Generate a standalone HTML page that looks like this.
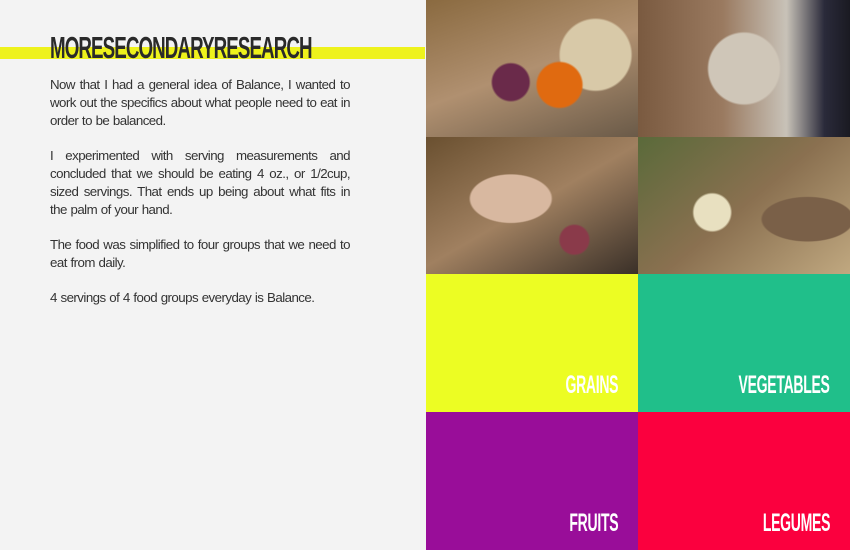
<!DOCTYPE html>
<html><head><style>
body{margin:0;width:850px;height:550px;overflow:hidden;background:#f3f3f3;position:relative;font-family:"Liberation Sans",sans-serif}
.bar{position:absolute;left:0;top:47px;width:425px;height:12px;background:#eef21c}
h1{position:absolute;left:50px;top:32px;margin:0;font-family:"Liberation Sans Narrow","Liberation Sans",sans-serif;font-weight:bold;font-size:31px;line-height:32px;color:#2a2a2a;letter-spacing:-1.5px;transform:scaleX(0.605);transform-origin:left}
.txt{position:absolute;left:50px;top:76px;width:300px;font-size:13.3px;line-height:18px;color:#333;text-align:justify;letter-spacing:-0.55px;word-spacing:0.5px}
.txt p{margin:0 0 17px}
.ph{position:absolute;width:212px;height:137px}
.t{position:absolute;width:212px;height:138px}
.t span{position:absolute;right:20px;bottom:12px;color:#fff;font-family:"Liberation Sans Narrow","Liberation Sans",sans-serif;font-weight:bold;font-size:25px;letter-spacing:-0.5px;transform:scaleX(0.56);transform-origin:right}
</style></head><body>
<div class="bar"></div>
<h1>MORESECONDARYRESEARCH</h1>
<div class="txt">
<p>Now that I had a general idea of Balance, I wanted to work out the specifics about what people need to eat in order to be balanced.</p>
<p>I experimented with serving measurements and concluded that we should be eating 4 oz., or 1/2cup, sized servings. That ends up being about what fits in the palm of your hand.</p>
<p>The food was simplified to four groups that we need to eat from daily.</p>
<p>4 servings of 4 food groups everyday is Balance.</p>
</div>
<div class="ph" style="left:426px;top:0;background:radial-gradient(circle at 40% 60%,#6a2a4a 0 18px,transparent 20px),radial-gradient(circle at 63% 62%,#e06a10 0 22px,transparent 24px),radial-gradient(circle at 80% 40%,#d8c9a8 0 35px,transparent 37px),linear-gradient(160deg,#8a6a40,#b09070 50%,#6a5a48)"></div>
<div class="ph" style="left:638px;top:0;width:212px;background:radial-gradient(circle at 50% 50%,#cfc6b8 0 35px,transparent 37px),linear-gradient(90deg,#7a5a40,#9a7a60 40%,#c8c2b8 70%,#2a2a3a 88%,#1a1a22)"></div>
<div class="ph" style="left:426px;top:137px;background:radial-gradient(ellipse at 40% 45%,#d8b8a0 0 40px,transparent 42px),radial-gradient(circle at 70% 75%,#8a3a4a 0 14px,transparent 16px),linear-gradient(150deg,#6a5030,#a08060 50%,#3a3028)"></div>
<div class="ph" style="left:638px;top:137px;width:212px;background:radial-gradient(circle at 35% 55%,#e8e0c0 0 18px,transparent 20px),radial-gradient(ellipse at 80% 60%,#7a6048 0 45px,transparent 47px),linear-gradient(140deg,#5a6a3a,#8a7050 50%,#c0a880)"></div>
<div class="t" style="left:426px;top:274px;background:#ecfd23"><span>GRAINS</span></div>
<div class="t" style="left:638px;top:274px;background:#20bf8a"><span>VEGETABLES</span></div>
<div class="t" style="left:426px;top:412px;background:#990d99"><span>FRUITS</span></div>
<div class="t" style="left:638px;top:412px;background:#fb003e"><span>LEGUMES</span></div>
</body></html>
